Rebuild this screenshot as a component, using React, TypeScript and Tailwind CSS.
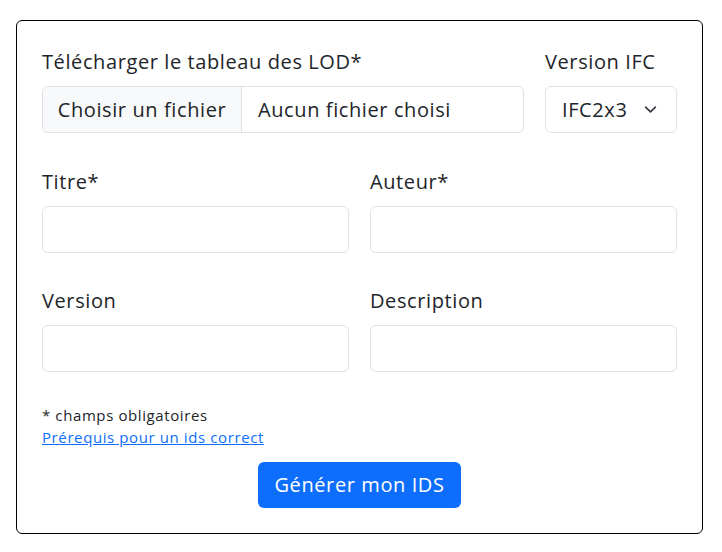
import React from 'react';

const font = { fontFamily: '"Open Sans", "Noto Sans", sans-serif' };

function Field({ label }: { label: string }) {
  return (
    <div>
      <label className="block text-[20px] tracking-[0.03em] leading-[30px] mb-[9px] text-[#212529]">{label}</label>
      <div className="h-[47px] rounded-md border border-[#dee2e6] bg-white" />
    </div>
  );
}

export default function App() {
  return (
    <div className="min-h-screen bg-white pl-4 pr-[19px] pt-5" style={font}>
      <div className="rounded-md border border-black px-[25px] pt-[26px] pb-[25px]">
        {/* Upload + IFC version */}
        <div className="flex gap-[21px]">
          <div className="flex-1">
            <label className="block text-[20px] tracking-[0.03em] leading-[30px] mb-[9px] text-[#212529]">Télécharger le tableau des LOD*</label>
            <div className="flex h-[47px] rounded-md border border-[#dee2e6] overflow-hidden text-[20px] tracking-[0.03em] text-[#212529]">
              <span className="flex w-[199px] shrink-0 items-center justify-center whitespace-nowrap bg-[#f8f9fa] border-r border-[#dee2e6]">Choisir un fichier</span>
              <span className="flex items-center px-4">Aucun fichier choisi</span>
            </div>
          </div>
          <div className="w-[132px]">
            <label className="block text-[20px] tracking-[0.03em] leading-[30px] mb-[9px] text-[#212529]">Version IFC</label>
            <div className="flex h-[47px] items-center justify-between rounded-md border border-[#dee2e6] pl-4 pr-[19px] text-[20px] tracking-[0.03em] text-[#212529]">
              <span>IFC2x3</span>
              <svg width="13" height="13" viewBox="0 0 16 16" fill="none" stroke="#343a40" strokeWidth="2" strokeLinecap="round" strokeLinejoin="round">
                <path d="m2 5 6 6 6-6" />
              </svg>
            </div>
          </div>
        </div>

        <div className="mt-[34px] grid grid-cols-2 gap-x-[21px]">
          <Field label="Titre*" />
          <Field label="Auteur*" />
        </div>

        <div className="mt-[33px] grid grid-cols-2 gap-x-[21px]">
          <Field label="Version" />
          <Field label="Description" />
        </div>

        <div className="mt-[32px] text-[15px] tracking-[0.04em] leading-[22px]">
          <p className="text-[#212529]">* champs obligatoires</p>
          <a href="#" className="text-[#0d6efd] underline">Prérequis pour un ids correct</a>
        </div>

        <div className="mt-[14px] flex justify-center">
          <button className="h-[46px] rounded-md bg-[#0d6efd] px-4 text-[20px] tracking-[0.03em] text-white">Générer mon IDS</button>
        </div>
      </div>
    </div>
  );
}
